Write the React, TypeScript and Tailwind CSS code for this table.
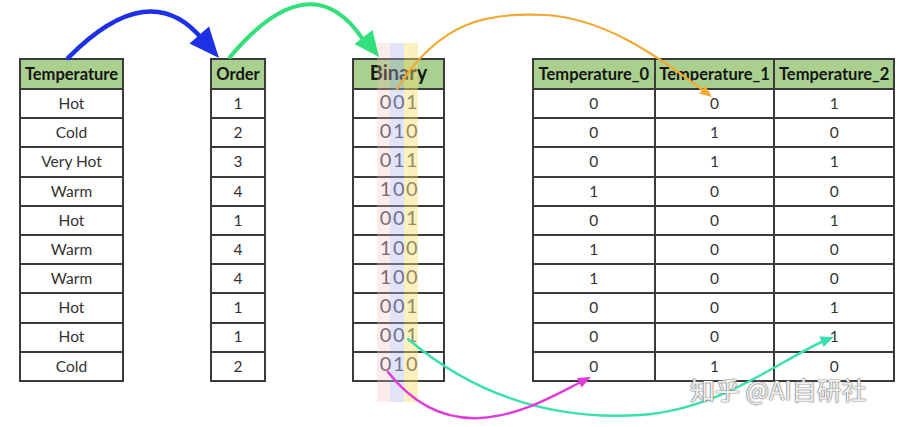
import React from "react";

const temps = ["Hot", "Cold", "Very Hot", "Warm", "Hot", "Warm", "Warm", "Hot", "Hot", "Cold"];
const orders = ["1", "2", "3", "4", "1", "4", "4", "1", "1", "2"];
const bins = ["001", "010", "011", "100", "001", "100", "100", "001", "001", "010"];

function SimpleTable({ title, rows, width }: { title: string; rows: string[]; width: string }) {
  return (
    <div className={`${width} border-2 border-[#3a3a3a] flex flex-col shrink-0`}>
      <div className="h-[28px] bg-[#a9d08e] flex items-center justify-center font-bold text-[16.5px] text-[#141414]">
        {title}
      </div>
      {rows.map((r, i) => (
        <div key={i} className="h-[29.2px] border-t-2 border-[#3a3a3a] flex items-center justify-center text-[15.5px] text-[#333]">
          {r}
        </div>
      ))}
    </div>
  );
}

function BinaryTable() {
  return (
    <div className="w-[93px] border-2 border-[#3a3a3a] flex flex-col shrink-0">
      <div className="h-[28px] bg-[#a9d08e] flex items-center justify-center font-bold text-[20px] text-[#141414] pb-[4px]">
        Binary
      </div>
      {bins.map((r, i) => (
        <div key={i} className="h-[29.2px] border-t-2 border-[#3a3a3a] flex items-center justify-center text-[20px] tracking-[1.5px] pl-[2px] text-[#46465a] pb-[6px]">
          {r}
        </div>
      ))}
    </div>
  );
}

function OneHotTable() {
  const heads = ["Temperature_0", "Temperature_1", "Temperature_2"];
  return (
    <div className="w-[363px] border-2 border-[#3a3a3a] flex flex-col shrink-0">
      <div className="h-[28px] bg-[#a9d08e] grid grid-cols-3 font-bold text-[16.5px] text-[#141414]">
        {heads.map((h, i) => (
          <div key={i} className={`flex items-center justify-center ${i > 0 ? "border-l-2 border-[#3a3a3a]" : ""}`}>
            {h}
          </div>
        ))}
      </div>
      {bins.map((b, i) => (
        <div key={i} className="h-[29.2px] border-t-2 border-[#3a3a3a] grid grid-cols-3 text-[15.5px] text-[#333]">
          {b.split("").map((d, j) => (
            <div key={j} className={`flex items-center justify-center ${j > 0 ? "border-l-2 border-[#3a3a3a]" : ""}`}>
              {d}
            </div>
          ))}
        </div>
      ))}
    </div>
  );
}

export default function App() {
  return (
    <div className="relative w-[906px] h-[427px] bg-white overflow-hidden font-['Lato','Open_Sans',sans-serif]">
      <div className="flex items-start pt-[58px] pl-[19px]">
        <SimpleTable title="Temperature" rows={temps} width="w-[105px]" />
        <div className="ml-[86px]">
          <SimpleTable title="Order" rows={orders} width="w-[56px]" />
        </div>
        <div className="ml-[86px]">
          <BinaryTable />
        </div>
        <div className="ml-[87px]">
          <OneHotTable />
        </div>
      </div>

      <svg className="absolute inset-0 pointer-events-none" width="906" height="427" viewBox="0 0 906 427">
        {/* stripes */}
        <rect x="377" y="43" width="13" height="359" fill="#f4c0c0" opacity="0.3" />
        <rect x="390" y="43" width="14" height="359" fill="#b0b8f0" opacity="0.38" />
        <rect x="404" y="43" width="14" height="359" fill="#f6e070" opacity="0.45" />

        {/* blue arrow */}
        <path d="M68,58 Q150,-25 203,40" fill="none" stroke="#1e30e6" strokeWidth="4.5" strokeLinecap="round" />
        <polygon points="219,58 189.5,43.5 209,26.5" fill="#1e30e6" />

        {/* green arrow */}
        <path d="M230,57 Q310,-38 362,38" fill="none" stroke="#34e07c" strokeWidth="4" strokeLinecap="round" />
        <polygon points="379,57 354.5,44 372.5,30" fill="#34e07c" />

        {/* orange arrow */}
        <path d="M397,89 C440,20 490,12 545,15 C600,18 650,50 704,91" fill="none" stroke="#f0aa34" strokeWidth="2.2" strokeLinecap="round" />
        <polygon points="712,97 699.4,93.8 705.4,85.8" fill="#f0aa34" />

        {/* teal arrow */}
        <path d="M408,339 C480,400 560,420 640,415 C720,410 780,360 824,341" fill="none" stroke="#3ce0b0" strokeWidth="2.5" strokeLinecap="round" />
        <polygon points="834,337 823.5,347 819.5,336.5" fill="#3ce0b0" />

        {/* magenta arrow */}
        <path d="M388,372 C410,400 440,420 480,418 C520,416 555,395 581,382" fill="none" stroke="#e03cd8" strokeWidth="2.5" strokeLinecap="round" />
        <polygon points="591,377 581.6,387.5 577,378" fill="#e03cd8" />
      </svg>

      <div className="absolute left-[690px] top-[374px] text-[25px] leading-[30px] text-white/90 whitespace-nowrap font-['Noto_Sans_CJK_SC','Noto_Sans',sans-serif] [text-shadow:0_0_1px_#666,0_0_1px_#666,0_0_2px_#999]">
        知乎 @AI自研社
      </div>
    </div>
  );
}
